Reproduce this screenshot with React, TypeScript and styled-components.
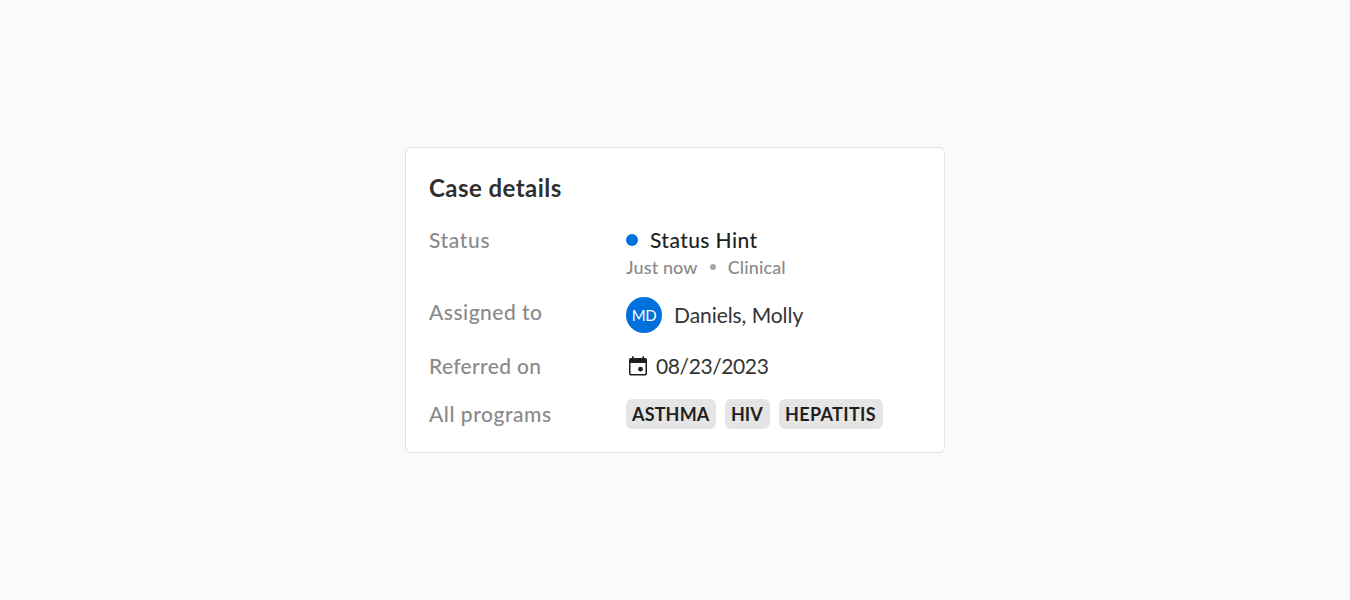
import React from "react";
import styled, { createGlobalStyle } from "styled-components";

const GlobalStyle = createGlobalStyle`
  * { box-sizing: border-box; }
  body {
    margin: 0;
    background: #fafafa;
    font-family: Lato, "Open Sans", sans-serif;
  }
`;

const Page = styled.main`
  min-height: 600px;
  display: flex;
  align-items: center;
  justify-content: center;
`;

const Card = styled.section`
  width: 540px;
  height: 306px;
  padding: 23px;
  border: 1px solid #e2e2e2;
  border-radius: 6px;
  background: #fff;
`;

const Title = styled.h2`
  margin: 0 0 20px;
  font-size: 24px;
  font-weight: 700;
  line-height: 34px;
  letter-spacing: 0.45px;
  color: #2f2f2f;
`;

const Row = styled.div<{ $gap?: number }>`
  display: grid;
  grid-template-columns: 197px 1fr;
  align-items: start;
  margin-bottom: ${(p) => p.$gap ?? 0}px;
`;

const Label = styled.div<{ $tracking: number }>`
  font-size: 21px;
  font-weight: 500;
  line-height: 30px;
  letter-spacing: ${(p) => p.$tracking}px;
  color: #8a8a8a;
`;

const Inline = styled.div<{ $gap: number }>`
  display: flex;
  align-items: center;
  gap: ${(p) => p.$gap}px;
`;

const StatusDot = styled.span`
  width: 12px;
  height: 12px;
  border-radius: 50%;
  background: #0070dd;
`;

const StatusText = styled.span`
  font-size: 21px;
  font-weight: 500;
  line-height: 30px;
  letter-spacing: 0.42px;
  color: #1f1f1f;
`;

const Meta = styled.span`
  font-size: 18px;
  font-weight: 500;
  line-height: 24px;
  letter-spacing: 0.12px;
  color: #8a8a8a;
`;

const Separator = styled.span`
  width: 6px;
  height: 6px;
  border-radius: 50%;
  background: #a6a6a6;
`;

const Avatar = styled.span`
  width: 36px;
  height: 36px;
  border-radius: 50%;
  display: flex;
  align-items: center;
  justify-content: center;
  background: #0070dd;
  color: #fff;
  font-size: 15px;
  letter-spacing: -0.3px;
`;

const Value = styled.span<{ $tracking: number }>`
  font-size: 21px;
  line-height: 30px;
  letter-spacing: ${(p) => p.$tracking}px;
  color: #333;
`;

const Chip = styled.span<{ $width: number; $tracking: number }>`
  width: ${(p) => p.$width}px;
  height: 30px;
  padding-left: 6px;
  border-radius: 6px;
  background: #e5e5e5;
  color: #1f1f1f;
  font-size: 18px;
  font-weight: 700;
  line-height: 30px;
  letter-spacing: ${(p) => p.$tracking}px;
  white-space: nowrap;
`;

const CalendarIcon = () => (
  <svg width="24" height="24" viewBox="0 0 24 24" fill="#1f1f1f" aria-hidden="true">
    <path
      fillRule="evenodd"
      d="M6 2.200h1.600V4h8.800V2.200H18V4h1.200a1.800 1.800 0 0 1 1.800 1.800v13.900a1.800 1.800 0 0 1-1.800 1.800H4.800A1.800 1.800 0 0 1 3 19.700V5.800A1.800 1.800 0 0 1 4.800 4H6ZM4.500 9v10.200a.8.8 0 0 0 .8.8h13.400a.8.8 0 0 0 .8-.8V9Z"
    />
    <circle cx="14.500" cy="15.200" r="2.400" />
  </svg>
);

const programs = [
  { name: "ASTHMA", width: 90, tracking: 0.15 },
  { name: "HIV", width: 45, tracking: 0 },
  { name: "HEPATITIS", width: 103.5, tracking: 0.35 },
];

export default function App() {
  return (
    <Page>
      <GlobalStyle />
      <Card>
        <Title>Case details</Title>
        <Row $gap={18}>
          <Label $tracking={0.65}>Status</Label>
          <div>
            <Inline $gap={12}>
              <StatusDot />
              <StatusText>Status Hint</StatusText>
            </Inline>
            <Inline $gap={12}>
              <Meta>Just now</Meta>
              <Separator />
              <Meta>Clinical</Meta>
            </Inline>
          </div>
        </Row>
        <Row $gap={18}>
          <Label $tracking={0.49}>Assigned to</Label>
          <Inline $gap={12}>
            <Avatar>MD</Avatar>
            <Value $tracking={-0.06}>Daniels, Molly</Value>
          </Inline>
        </Row>
        <Row $gap={18}>
          <Label $tracking={0.33}>Referred on</Label>
          <Inline $gap={6}>
            <CalendarIcon />
            <Value $tracking={-0.4}>08/23/2023</Value>
          </Inline>
        </Row>
        <Row>
          <Label $tracking={0.55}>All programs</Label>
          <Inline $gap={9}>
            {programs.map((p) => (
              <Chip key={p.name} $width={p.width} $tracking={p.tracking}>
                {p.name}
              </Chip>
            ))}
          </Inline>
        </Row>
      </Card>
    </Page>
  );
}
